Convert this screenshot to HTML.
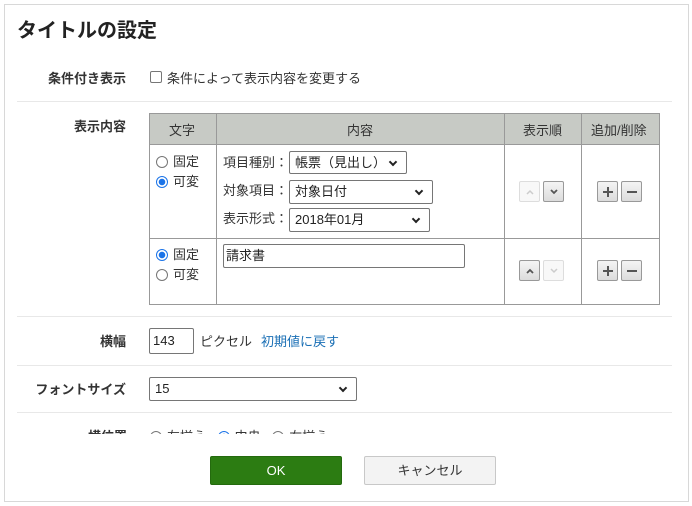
<!DOCTYPE html>
<html><head><meta charset="utf-8"><style>
*{box-sizing:border-box;margin:0;padding:0}
body{width:692px;height:506px;background:#fff;font-family:"Liberation Sans","Noto Sans CJK JP",sans-serif;font-size:13px;color:#333;position:relative;overflow:hidden}
.a{position:absolute}
.box{position:absolute;left:4px;top:4px;width:685px;height:498px;border:1px solid #d8d8d8}
.lbl{position:absolute;right:566px;font-weight:bold;font-size:13px;white-space:nowrap;color:#333}
.sep{position:absolute;left:17px;width:655px;height:1px;background:#e8e8e8}
.sel{position:absolute;border:1px solid #767676;border-radius:2px;background:#fff;font-size:13px;padding-left:5px;line-height:21px;color:#222}
.sel:after{content:"";position:absolute;right:10px;top:7px;width:4px;height:4px;border-right:2px solid #222;border-bottom:2px solid #222;transform:rotate(45deg)}
.rad{display:inline-block;width:12px;height:12px;border:1px solid #767676;border-radius:50%;vertical-align:-2px;margin-right:5px;background:#fff}
.rad.on{border:1px solid #1a73e8;background:radial-gradient(circle,#1a73e8 3px,#fff 3.5px)}
.sb{position:absolute;width:21px;height:21px;border:1px solid #999;border-radius:2px;background:linear-gradient(#f4f4f4,#dcdcdc);text-align:center;color:#555}
.sb.dis{border-color:#ddd;background:#f8f8f8}
.sb svg{position:absolute;left:5px;top:5px}
.pm{position:absolute;left:5px;top:9px;width:10px;height:2px;background:#555}
.pv{position:absolute;left:9px;top:5px;width:2px;height:10px;background:#555}
</style></head><body>
<div class="box"></div>
<div class="a" style="left:17px;top:14px;font-size:20px;font-weight:bold;color:#222">タイトルの設定</div>

<div class="lbl" style="top:68px">条件付き表示</div>
<div class="a" style="left:150px;top:71px;width:12px;height:12px;border:1px solid #767676;border-radius:2px"></div>
<div class="a" style="left:167px;top:68px">条件によって表示内容を変更する</div>
<div class="sep" style="top:101px"></div>

<div class="lbl" style="top:116px">表示内容</div>
<div class="a" style="left:149px;top:113px;width:511px;height:192px;border:1px solid #999"></div>
<div class="a" style="left:150px;top:114px;width:509px;height:31px;background:#c7cac5;border-bottom:1px solid #999"></div>
<div class="a" style="left:216px;top:114px;width:1px;height:190px;background:#999"></div>
<div class="a" style="left:504px;top:114px;width:1px;height:190px;background:#999"></div>
<div class="a" style="left:581px;top:114px;width:1px;height:190px;background:#999"></div>
<div class="a" style="left:150px;top:238px;width:509px;height:1px;background:#999"></div>
<div class="a" style="left:169px;top:120px">文字</div>
<div class="a" style="left:347px;top:120px">内容</div>
<div class="a" style="left:523px;top:120px">表示順</div>
<div class="a" style="left:591px;top:120px">追加/削除</div>

<div class="a" style="left:156px;top:151px"><span class="rad"></span>固定</div>
<div class="a" style="left:156px;top:171px"><span class="rad on"></span>可変</div>
<div class="a" style="left:223px;top:152px">項目種別：</div>
<div class="sel" style="left:289px;top:151px;width:118px;height:23px">帳票（見出し）</div>
<div class="a" style="left:223px;top:180px">対象項目：</div>
<div class="sel" style="left:289px;top:180px;width:144px;height:24px">対象日付</div>
<div class="a" style="left:223px;top:208px">表示形式：</div>
<div class="sel" style="left:289px;top:208px;width:141px;height:24px">2018年01月</div>
<div class="sb dis" style="left:519px;top:181px"><svg width="10" height="10"><path d="M2 7L5 4L8 7" fill="none" stroke="#ccc" stroke-width="1.5"/></svg></div>
<div class="sb" style="left:543px;top:181px"><svg width="10" height="10"><path d="M2 3L5 6L8 3" fill="none" stroke="#555" stroke-width="1.8"/></svg></div>
<div class="sb" style="left:597px;top:181px"><div class="pm"></div><div class="pv"></div></div>
<div class="sb" style="left:621px;top:181px"><div class="pm"></div></div>

<div class="a" style="left:156px;top:244px"><span class="rad on"></span>固定</div>
<div class="a" style="left:156px;top:264px"><span class="rad"></span>可変</div>
<div class="a" style="left:223px;top:244px;width:242px;height:24px;border:1px solid #767676;border-radius:2px;padding-left:2px;line-height:21px;color:#222">請求書</div>
<div class="sb" style="left:519px;top:260px"><svg width="10" height="10"><path d="M2 7L5 4L8 7" fill="none" stroke="#555" stroke-width="1.8"/></svg></div>
<div class="sb dis" style="left:543px;top:260px"><svg width="10" height="10"><path d="M2 3L5 6L8 3" fill="none" stroke="#ccc" stroke-width="1.5"/></svg></div>
<div class="sb" style="left:597px;top:260px"><div class="pm"></div><div class="pv"></div></div>
<div class="sb" style="left:621px;top:260px"><div class="pm"></div></div>

<div class="sep" style="top:316px"></div>
<div class="lbl" style="top:331px">横幅</div>
<div class="a" style="left:149px;top:328px;width:45px;height:26px;border:1px solid #767676;border-radius:2px;padding-left:3px;line-height:24px;color:#222">143</div>
<div class="a" style="left:200px;top:331px">ピクセル</div>
<div class="a" style="left:261px;top:331px;color:#1a6fb5">初期値に戻す</div>

<div class="sep" style="top:365px"></div>
<div class="lbl" style="top:379px">フォントサイズ</div>
<div class="sel" style="left:149px;top:377px;width:208px;height:24px">15</div>
<div class="sep" style="top:412px"></div>
<div class="a" style="left:0;top:424px;width:692px;height:10px;overflow:hidden">
 <div class="a" style="left:88px;top:2px;font-weight:bold">横位置</div>
 <div class="a" style="left:150px;top:2px"><span class="rad"></span>左揃え <span class="rad on" style="margin-left:8px"></span>中央 <span class="rad" style="margin-left:8px"></span>右揃え</div>
</div>

<div class="a" style="left:210px;top:456px;width:132px;height:29px;background:#2c7c12;border:1px solid #246a0e;border-radius:2px;color:#fff;text-align:center;line-height:27px;font-size:13px">OK</div>
<div class="a" style="left:364px;top:456px;width:132px;height:29px;background:#f3f3f3;border:1px solid #c8c8c8;border-radius:2px;color:#333;text-align:center;line-height:27px">キャンセル</div>
</body></html>
